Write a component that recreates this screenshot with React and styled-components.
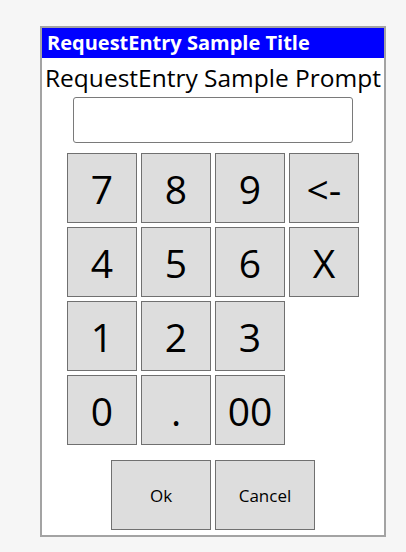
import React from "react";
import styled, { createGlobalStyle } from "styled-components";

const Global = createGlobalStyle`
  html, body { margin: 0; padding: 0; background: #f6f6f6; }
  body { font-family: "Open Sans", "Noto Sans", sans-serif; }
`;

const Frame = styled.div`
  box-sizing: border-box;
  margin: 26px 0 0 40px;
  width: 346px;
  height: 511px;
  border: 2px solid #a3a3a3;
  background: #ffffff;
  display: flex;
  flex-direction: column;
`;

const TitleBar = styled.div`
  height: 30px;
  background: #0000ff;
  color: #ffffff;
  font-weight: 700;
  font-size: 20px;
  line-height: 30px;
  padding-left: 5px;
  white-space: nowrap;
`;

const Prompt = styled.div`
  height: 39px;
  line-height: 40px;
  text-align: center;
  font-size: 24.5px;
  color: #000;
  white-space: nowrap;
`;

const Entry = styled.input`
  box-sizing: border-box;
  align-self: center;
  width: 280px;
  height: 46px;
  border: 1px solid #7a7a7a;
  border-radius: 3px;
  background: #fff;
  outline: none;
  margin: 0;
`;

const Pad = styled.div`
  align-self: center;
  margin-top: 10px;
  display: grid;
  grid-template-columns: repeat(4, 70px);
  grid-auto-rows: 70px;
  gap: 4px;
`;

const Key = styled.button`
  box-sizing: border-box;
  margin: 0;
  padding: 0;
  border: 1px solid #707070;
  background: #dddddd;
  color: #000;
  font-family: inherit;
  font-size: ${(p) => (p.$small ? "17px" : "39px")};
  grid-column: ${(p) => p.$col || "auto"};
  width: ${(p) => (p.$wide ? "100px" : "70px")};
  height: 70px;
  display: flex;
  align-items: center;
  justify-content: center;
`;

const Actions = styled.div`
  align-self: center;
  margin-top: 15px;
  display: flex;
  gap: 4px;
`;

const keys = [
  ["7", "8", "9", "<-"],
  ["4", "5", "6", "X"],
  ["1", "2", "3"],
  ["0", ".", "00"],
];

export default function App() {
  return (
    <>
      <Global />
      <Frame>
        <TitleBar>RequestEntry Sample Title</TitleBar>
        <Prompt>RequestEntry Sample Prompt</Prompt>
        <Entry type="text" />
        <Pad>
          {keys.map((row, r) =>
            row.map((k, c) => (
              <Key key={`${r}-${c}`} $col={c + 1}>
                {k}
              </Key>
            ))
          )}
        </Pad>
        <Actions>
          <Key $wide $small>Ok</Key>
          <Key $wide $small>Cancel</Key>
        </Actions>
      </Frame>
    </>
  );
}
